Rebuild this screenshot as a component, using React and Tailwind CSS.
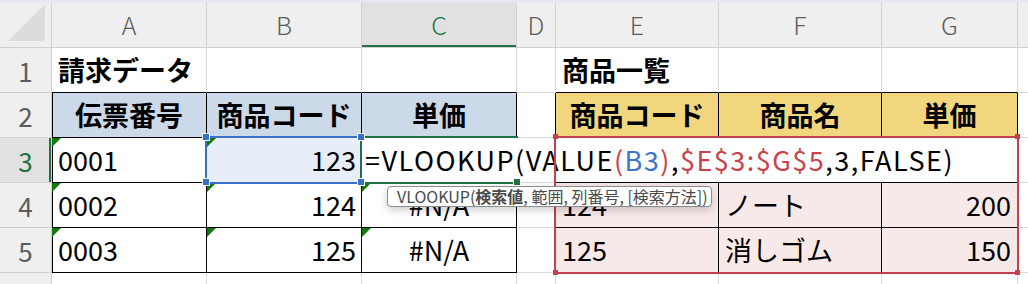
import clsx from "clsx";

const cols = ["A", "B", "C", "D", "E", "F", "G"];

function Tri() {
    return (
        <span className="absolute left-0 top-0 h-0 w-0 border-t-[9px] border-r-[9px] border-t-[#12790f] border-r-transparent" />
    );
}

function Cell({ children, className, tri = false }) {
    return (
        <div
            className={clsx(
                "relative flex items-center overflow-hidden whitespace-nowrap border-r border-b px-[6px] text-[27px] text-black",
                className
            )}
        >
            {tri && <Tri />}
            {children}
        </div>
    );
}

function RowHead({ n, active = false }) {
    return (
        <div
            className={clsx(
                "flex items-center justify-center border-r border-b border-[#d0d0d0] text-[26px]",
                active
                    ? "bg-[#e1e1e1] text-[#217346] shadow-[inset_-2px_0_0_#217346]"
                    : "bg-[#efefef] text-[#5c5c5c]"
            )}
        >
            {n}
        </div>
    );
}

export default function App() {
    return (
        <div
            className="relative h-[284px] w-[1028px] overflow-hidden bg-white"
            style={{ fontFamily: '"Noto Sans CJK JP", "Noto Sans", sans-serif' }}
        >
            <div className="h-[3px] bg-[#e4e7eb]" />

            <div className="grid grid-cols-[52px_155px_155px_155px_39px_163px_163px_136px_1fr] grid-rows-[45px_45px_45px_45px_45px_45px_45px]">
                {/* column headers */}
                <div className="relative border-r border-b border-[#d0d0d0] bg-[#efefef]">
                    <span className="absolute bottom-[6px] right-[6px] h-0 w-0 border-b-[37px] border-l-[37px] border-b-[#dcdcdc] border-l-transparent" />
                </div>
                {cols.map((c) => (
                    <div
                        key={c}
                        className={clsx(
                            "flex items-center justify-center border-r border-b border-[#d0d0d0] text-[25px] font-light",
                            c === "C"
                                ? "bg-[#e1e1e1] text-[#217346] shadow-[inset_0_-2px_0_#217346]"
                                : "bg-[#efefef] text-[#5c5c5c]"
                        )}
                    >
                        {c}
                    </div>
                ))}
                <div className="border-b border-[#d0d0d0] bg-[#efefef]" />

                {/* row 1 */}
                <RowHead n="1" />
                <Cell className="border-r-[#d9d9d9] border-b-black font-bold">請求データ</Cell>
                <Cell className="border-r-[#d9d9d9] border-b-black" />
                <Cell className="border-r-[#d9d9d9] border-b-black" />
                <Cell className="border-[#d9d9d9]" />
                <Cell className="border-r-[#d9d9d9] border-b-black font-bold">商品一覧</Cell>
                <Cell className="border-r-[#d9d9d9] border-b-black" />
                <Cell className="border-r-[#d9d9d9] border-b-black" />
                <Cell className="border-[#d9d9d9]" />

                {/* row 2 */}
                <RowHead n="2" />
                <Cell className="justify-center border-black bg-[#ccd9e8] font-bold shadow-[inset_1px_0_0_#000]">伝票番号</Cell>
                <Cell className="justify-center border-black bg-[#ccd9e8] font-bold">商品コード</Cell>
                <Cell className="justify-center border-black bg-[#ccd9e8] font-bold">単価</Cell>
                <Cell className="border-r-black border-b-[#d9d9d9]" />
                <Cell className="justify-center border-black bg-[#f1d67e] font-bold">商品コード</Cell>
                <Cell className="justify-center border-black bg-[#f1d67e] font-bold">商品名</Cell>
                <Cell className="justify-center border-black bg-[#f1d67e] font-bold">単価</Cell>
                <Cell className="border-[#d9d9d9]" />

                {/* row 3 (D..G hidden under the edit box) */}
                <RowHead n="3" active />
                <Cell tri className="border-black shadow-[inset_1px_0_0_#000]">0001</Cell>
                <Cell tri className="justify-end border-black bg-[#e8eef8] pr-[5px]">123</Cell>
                <Cell className="border-black" />
                <Cell className="border-r-black border-b-[#d9d9d9]" />
                <Cell className="border-black bg-[#f8e9e9]" />
                <Cell className="border-black bg-[#f8e9e9]" />
                <Cell className="border-black bg-[#f8e9e9]" />
                <Cell className="border-[#d9d9d9]" />

                {/* row 4 */}
                <RowHead n="4" />
                <Cell tri className="border-black shadow-[inset_1px_0_0_#000]">0002</Cell>
                <Cell tri className="justify-end border-black pr-[5px]">124</Cell>
                <Cell tri className="justify-center border-black">#N/A</Cell>
                <Cell className="border-r-black border-b-[#d9d9d9]" />
                <Cell className="border-black bg-[#f8e9e9]">124</Cell>
                <Cell className="border-black bg-[#f8e9e9]">ノート</Cell>
                <Cell className="justify-end border-black bg-[#f8e9e9]">200</Cell>
                <Cell className="border-[#d9d9d9]" />

                {/* row 5 */}
                <RowHead n="5" />
                <Cell tri className="border-black shadow-[inset_1px_0_0_#000]">0003</Cell>
                <Cell tri className="justify-end border-black pr-[5px]">125</Cell>
                <Cell tri className="justify-center border-black">#N/A</Cell>
                <Cell className="border-r-black border-b-[#d9d9d9]" />
                <Cell className="border-black bg-[#f8e9e9]">125</Cell>
                <Cell className="border-black bg-[#f8e9e9]">消しゴム</Cell>
                <Cell className="justify-end border-black bg-[#f8e9e9]">150</Cell>
                <Cell className="border-[#d9d9d9]" />

                {/* row 6 */}
                <RowHead n="6" />
                {cols.map((c) => (
                    <Cell key={c} className="border-[#d9d9d9]" />
                ))}
                <Cell className="border-[#d9d9d9]" />
            </div>

            {/* B3 selection */}
            <div className="absolute left-[205px] top-[136px] h-[48px] w-[158px] border-2 border-[#3a70c8]" />

            {/* C3 edit box, text overflows to the right */}
            <div className="absolute left-[362px] top-[138px] flex h-[44px] w-[655px] items-center bg-white pl-[3px] text-[27px] tracking-[1.5px] text-black">
                <span>=VLOOKUP(VALUE</span>
                <span className="text-[#c8424a]">(</span>
                <span className="text-[#3a74cc]">B3</span>
                <span className="text-[#c8424a]">)</span>
                <span>,</span>
                <span className="text-[#c8424a]">$E$3:$G$5</span>
                <span>,3,FALSE)</span>
            </div>
            <div className="absolute left-[360px] top-[136px] h-[48px] w-[158px] border-2 border-r-0 border-[#217346]" />
            <span className="absolute left-[514px] top-[179px] h-[6px] w-[6px] bg-[#217346] ring-1 ring-white" />

            {/* B3 handles */}
            <span className="absolute left-[203px] top-[134px] h-[6px] w-[6px] bg-[#3a70c8] ring-1 ring-white" />
            <span className="absolute left-[358px] top-[134px] h-[6px] w-[6px] bg-[#3a70c8] ring-1 ring-white" />
            <span className="absolute left-[203px] top-[179px] h-[6px] w-[6px] bg-[#3a70c8] ring-1 ring-white" />
            <span className="absolute left-[358px] top-[179px] h-[6px] w-[6px] bg-[#3a70c8] ring-1 ring-white" />

            {/* referenced range E3:G5 */}
            <div className="absolute left-[554px] top-[136px] h-[138px] w-[465px] border-2 border-[#c4404a]" />
            <span className="absolute left-[553px] top-[134px] h-[5px] w-[5px] bg-[#c4404a]" />
            <span className="absolute left-[1015px] top-[134px] h-[5px] w-[5px] bg-[#c4404a]" />
            <span className="absolute left-[553px] top-[270px] h-[5px] w-[5px] bg-[#c4404a]" />
            <span className="absolute left-[1015px] top-[270px] h-[5px] w-[5px] bg-[#c4404a]" />

            {/* function tooltip */}
            <div className="absolute left-[387px] top-[186px] h-[21px] w-[325px] whitespace-nowrap rounded-[4px] border border-[#8c8c8c] bg-white pl-[9px] text-[16px] leading-[19px] text-[#4a4a4a] shadow-[0_3px_8px_rgba(0,0,0,0.2)]">
                VLOOKUP(<b className="font-bold">検索値</b>, 範囲, 列番号, [検索方法])
            </div>
        </div>
    );
}
